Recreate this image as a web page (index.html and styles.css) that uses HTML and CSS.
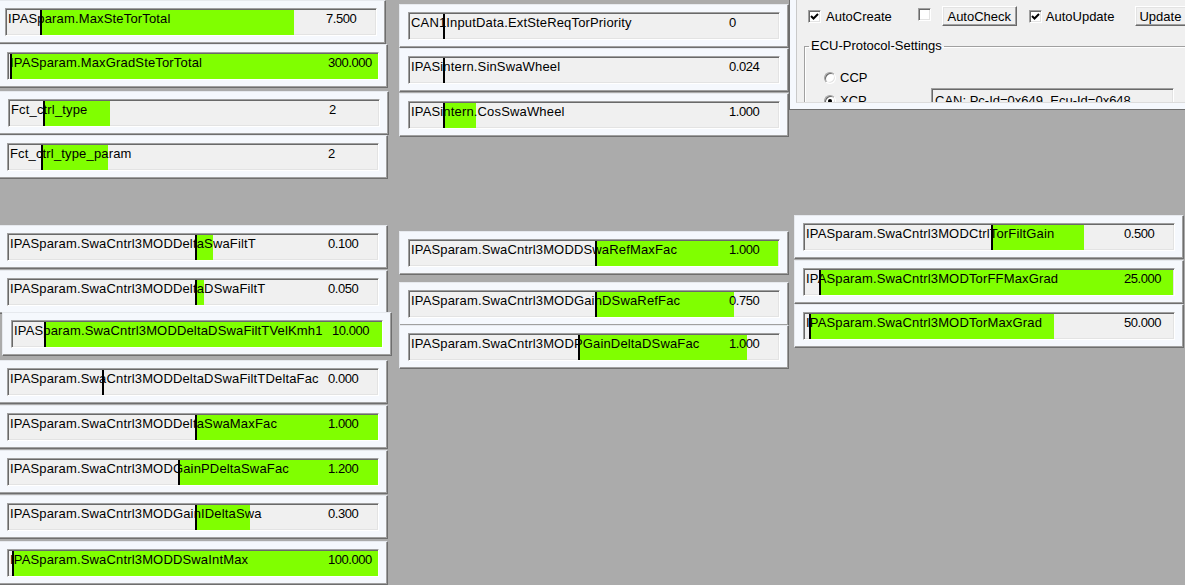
FILE: index.html
```html
<!DOCTYPE html>
<html>
<head>
<meta charset="utf-8">
<link rel="stylesheet" href="styles.css">
</head>
<body>
<div class="desk">
  <div class="meas w1"><div class="field"><div class="bar" style="left:34px;width:254px"></div><div class="mark" style="left:34px"></div><span class="name">IPASparam.MaxSteTorTotal</span><span class="val">7.500</span></div></div>
  <div class="meas w2"><div class="field"><div class="bar" style="left:2px;width:368px"></div><div class="mark" style="left:2px"></div><span class="name">IPASparam.MaxGradSteTorTotal</span><span class="val">300.000</span></div></div>
  <div class="meas w3"><div class="field"><div class="bar" style="left:34px;width:67px"></div><div class="mark" style="left:34px"></div><span class="name">Fct_ctrl_type</span><span class="val">2</span></div></div>
  <div class="meas w4"><div class="field"><div class="bar" style="left:33px;width:67px"></div><div class="mark" style="left:33px"></div><span class="name">Fct_ctrl_type_param</span><span class="val">2</span></div></div>

  <div class="meas w5"><div class="field"><div class="mark" style="left:34px"></div><span class="name">CAN1InputData.ExtSteReqTorPriority</span><span class="val">0</span></div></div>
  <div class="meas w6"><div class="field"><div class="mark" style="left:34px"></div><span class="name">IPASintern.SinSwaWheel</span><span class="val">0.024</span></div></div>
  <div class="meas w7"><div class="field"><div class="bar" style="left:34px;width:33px"></div><div class="mark" style="left:34px"></div><span class="name">IPASintern.CosSwaWheel</span><span class="val">1.000</span></div></div>

  <div class="meas w8"><div class="field"><div class="bar" style="left:187px;width:93px"></div><div class="mark" style="left:187px"></div><span class="name">IPASparam.SwaCntrl3MODCtrlTorFiltGain</span><span class="val">0.500</span></div></div>
  <div class="meas w9"><div class="field"><div class="bar" style="left:15px;width:354px"></div><div class="mark" style="left:15px"></div><span class="name">IPASparam.SwaCntrl3MODTorFFMaxGrad</span><span class="val">25.000</span></div></div>
  <div class="meas w10"><div class="field"><div class="bar" style="left:5px;width:245px"></div><div class="mark" style="left:5px"></div><span class="name">IPASparam.SwaCntrl3MODTorMaxGrad</span><span class="val">50.000</span></div></div>

  <div class="meas w11"><div class="field"><div class="bar" style="left:186px;width:183px"></div><div class="mark" style="left:186px"></div><span class="name">IPASparam.SwaCntrl3MODDSwaRefMaxFac</span><span class="val">1.000</span></div></div>
  <div class="meas w12"><div class="field"><div class="bar" style="left:186px;width:139px"></div><div class="mark" style="left:186px"></div><span class="name">IPASparam.SwaCntrl3MODGainDSwaRefFac</span><span class="val">0.750</span></div></div>
  <div class="meas w13"><div class="field"><div class="bar" style="left:169px;width:169px"></div><div class="mark" style="left:169px"></div><span class="name">IPASparam.SwaCntrl3MODPGainDeltaDSwaFac</span><span class="val">1.000</span></div></div>

  <div class="meas w14"><div class="field"><div class="bar" style="left:187px;width:18px"></div><div class="mark" style="left:187px"></div><span class="name">IPASparam.SwaCntrl3MODDeltaSwaFiltT</span><span class="val">0.100</span></div></div>
  <div class="meas w15"><div class="field"><div class="bar" style="left:187px;width:9px"></div><div class="mark" style="left:187px"></div><span class="name">IPASparam.SwaCntrl3MODDeltaDSwaFiltT</span><span class="val">0.050</span></div></div>
  <div class="meas w16"><div class="field"><div class="bar" style="left:32px;width:338px"></div><div class="mark" style="left:32px"></div><span class="name">IPASparam.SwaCntrl3MODDeltaDSwaFiltTVelKmh1</span><span class="val">10.000</span></div></div>
  <div class="meas w17"><div class="field"><div class="mark" style="left:94px"></div><span class="name">IPASparam.SwaCntrl3MODDeltaDSwaFiltTDeltaFac</span><span class="val">0.000</span></div></div>
  <div class="meas w18"><div class="field"><div class="bar" style="left:187px;width:183px"></div><div class="mark" style="left:187px"></div><span class="name">IPASparam.SwaCntrl3MODDeltaSwaMaxFac</span><span class="val">1.000</span></div></div>
  <div class="meas w19"><div class="field"><div class="bar" style="left:170px;width:200px"></div><div class="mark" style="left:170px"></div><span class="name">IPASparam.SwaCntrl3MODGainPDeltaSwaFac</span><span class="val">1.200</span></div></div>
  <div class="meas w20"><div class="field"><div class="bar" style="left:187px;width:55px"></div><div class="mark" style="left:187px"></div><span class="name">IPASparam.SwaCntrl3MODGainIDeltaSwa</span><span class="val">0.300</span></div></div>
  <div class="meas w21"><div class="field"><div class="bar" style="left:4px;width:366px"></div><div class="mark" style="left:4px"></div><span class="name">IPASparam.SwaCntrl3MODDSwaIntMax</span><span class="val">100.000</span></div></div>

  <div class="ctl">
    <div class="ctl-body">
      <div class="ctl-row">
        <span class="chk on c1"><svg viewBox="0 0 11 11" width="11" height="11"><polyline points="2,5 4.5,7.5 9,3" fill="none" stroke="#000" stroke-width="2"/></svg></span>
        <span class="lbl l1">AutoCreate</span>
        <span class="chk c2"></span>
        <span class="btn b1">AutoCheck</span>
        <span class="chk on c3"><svg viewBox="0 0 11 11" width="11" height="11"><polyline points="2,5 4.5,7.5 9,3" fill="none" stroke="#000" stroke-width="2"/></svg></span>
        <span class="lbl l3">AutoUpdate</span>
        <span class="btn b2">Update</span>
      </div>
      <fieldset class="grp">
        <legend>ECU-Protocol-Settings</legend>
        <div class="opt o1"><span class="radio"></span><span class="lbl">CCP</span></div>
        <div class="opt o2"><span class="radio sel"></span><span class="lbl">XCP</span><span class="edit">CAN: Pc-Id=0x649, Ecu-Id=0x648</span></div>
      </fieldset>
    </div>
  </div>
</div>
</body>
</html>
```

FILE: styles.css
```css
html, body {
  margin: 0;
  padding: 0;
}
body {
  background: #ababab;
  font-family: "Liberation Sans", Arial, sans-serif;
  font-size: 13px;
  color: #000;
  overflow: hidden;
}
.desk {
  position: relative;
  width: 1185px;
  height: 585px;
  overflow: hidden;
}

/* measurement windows on the free canvas */
.meas {
  position: absolute;
  width: 390px;
  height: 44px;
  box-sizing: border-box;
  padding: 7px 8px;
  background: #f5f8fd;
  border: 1px solid;
  border-color: #e6e9ee #6e6e6e #6e6e6e #e6e9ee;
  box-shadow: inset -1px -1px 0 #a0a0a0;
}
.w1 { left: -4px; top: 0; }
.w2 { left: -2px; top: 44px; }
.w3 { left: -1px; top: 91px; }
.w4 { left: -2px; top: 135px; }
.w5 { left: 399px; top: 4px; }
.w6 { left: 399px; top: 48px; }
.w7 { left: 399px; top: 93px; }
.w8 { left: 794px; top: 215px; }
.w9 { left: 794px; top: 260px; }
.w10 { left: 794px; top: 304px; }
.w11 { left: 399px; top: 231px; }
.w12 { left: 399px; top: 282px; }
.w13 { left: 399px; top: 325px; }
.w14 { left: -2px; top: 225px; }
.w15 { left: -2px; top: 270px; }
.w16 { left: 2px; top: 312px; }
.w17 { left: -2px; top: 360px; }
.w18 { left: -2px; top: 405px; }
.w19 { left: -2px; top: 450px; }
.w20 { left: -2px; top: 495px; }
.w21 { left: -2px; top: 541px; }

.field {
  position: relative;
  height: 28px;
  box-sizing: border-box;
  background: #f0f0f0;
  border: 1px solid;
  border-color: #a0a0a0 #ffffff #ffffff #a0a0a0;
  box-shadow: inset 1px 1px 0 #696969, inset -1px -1px 0 #e3e3e3;
  display: grid;
  grid-template-columns: 318px auto;
  align-content: start;
  padding: 2px 0 0 2px;
  line-height: 15px;
  white-space: nowrap;
}
.bar {
  position: absolute;
  top: 1px;
  bottom: 0;
  background: #80ff00;
}
.mark {
  position: absolute;
  top: 1px;
  bottom: 0;
  width: 2px;
  background: #000;
  z-index: 2;
}
.name, .val {
  position: relative;
  z-index: 1;
}
.name { letter-spacing: 0.16px; }
.val { letter-spacing: -0.45px; }

/* control panel window */
.ctl {
  position: absolute;
  left: 789px;
  top: -40px;
  width: 420px;
  height: 150px;
  box-sizing: border-box;
  background: #f5f8fd;
  border: 1px solid #6e6e6e;
  padding: 6px;
}
.ctl-body {
  height: 100%;
  box-sizing: border-box;
  background: #f0f0f0;
  border-left: 1px solid #c9c9c9;
  border-bottom: 1px solid #dcdcdc;
  overflow: hidden;
  padding-top: 39px;
}
.ctl-row {
  display: flex;
  align-items: center;
  height: 20px;
  line-height: 15px;
  white-space: nowrap;
}
.chk {
  width: 13px;
  height: 13px;
  box-sizing: border-box;
  background: #fff;
  border: 1px solid;
  border-color: #a0a0a0 #fff #fff #a0a0a0;
  box-shadow: inset 1px 1px 0 #696969, inset -1px -1px 0 #e3e3e3;
  display: flex;
  align-items: center;
  justify-content: center;
  flex: none;
}
.chk svg { display: block; }
.btn {
  height: 20px;
  box-sizing: border-box;
  background: #f0f0f0;
  border: 1px solid;
  border-color: #fff #696969 #696969 #fff;
  box-shadow: inset -1px -1px 0 #a0a0a0, inset 1px 1px 0 #e3e3e3;
  display: flex;
  align-items: center;
  justify-content: center;
  flex: none;
}
.c1 { margin-left: 11px; }
.l1 { margin-left: 5px; }
.c2 { margin-left: 26px; margin-top: -4px; }
.b1 { margin-left: 11px; width: 75px; }
.c3 { margin-left: 12px; }
.l3 { margin-left: 4px; }
.b2 { margin-left: 21px; width: 60px; justify-content: flex-start; padding-left: 3px; }

.grp {
  margin: 12px 0 0 7px;
  padding: 0;
  width: 420px;
  min-width: 0;
  border: 1px solid #a0a0a0;
  box-shadow: 1px 1px 0 #fff, inset 1px 1px 0 #fff;
  line-height: 16px;
}
.grp legend {
  padding: 0 2px;
  margin-left: 4px;
  line-height: 16px;
}
.opt {
  display: flex;
  align-items: center;
  height: 16px;
  padding-left: 19px;
  white-space: nowrap;
}
.o1 { margin-top: 16px; }
.o2 { margin-top: 7px; }
.opt .lbl { margin-left: 4px; }
.o2 .lbl { width: 91px; }
.radio {
  width: 12px;
  height: 12px;
  box-sizing: border-box;
  border-radius: 50%;
  background: #fff;
  border: 1px solid;
  border-color: #a0a0a0 #fff #fff #a0a0a0;
  box-shadow: inset 1px 1px 0 #696969, inset -1px -1px 0 #e3e3e3;
  display: flex;
  align-items: center;
  justify-content: center;
  flex: none;
}
.radio.sel::after {
  content: "";
  width: 4px;
  height: 4px;
  border-radius: 50%;
  background: #000;
}
.edit {
  align-self: flex-start;
  margin-top: -5px;
  width: 243px;
  height: 22px;
  box-sizing: border-box;
  background: #f0f0f0;
  border: 1px solid;
  border-color: #a0a0a0 #fff #fff #a0a0a0;
  box-shadow: inset 1px 1px 0 #696969, inset -1px -1px 0 #e3e3e3;
  padding: 4px 0 0 3px;
  line-height: 15px;
}
```
